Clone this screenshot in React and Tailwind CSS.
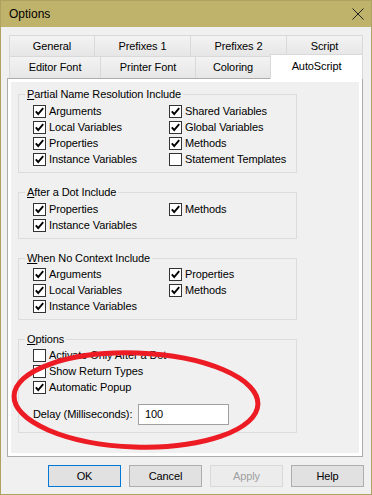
import React from 'react';

const Check = ({ checked }) => (
  <svg width="13" height="13" viewBox="0 0 13 13" className="shrink-0">
    <rect x="0.5" y="0.5" width="12" height="12" fill="#fff" stroke="#333" />
    {checked && (
      <path d="M2.8 6.4 L5.2 9 L10.2 3.2" fill="none" stroke="#000" strokeWidth="1.9" />
    )}
  </svg>
);

const Item = ({ label, checked = true }) => (
  <div className="flex h-[16px] items-center gap-[3px]">
    <Check checked={checked} />
    <span>{label}</span>
  </div>
);

const Group = ({ first, rest, children, className = '', bodyClass = '' }) => (
  <fieldset className={`w-[279px] border border-[#dcdcdc] px-[6px] ${className}`}>
    <legend className="px-[2px] leading-[16px]">
      <span className="underline">{first}</span>
      {rest}
    </legend>
    <div className={`pl-[8px] ${bodyClass}`}>{children}</div>
  </fieldset>
);

const Tab = ({ w, label, first }) => (
  <div
    className={`${w} ${first ? '' : '-ml-px'} flex items-center justify-center border-[#d9d9d9] bg-linear-to-b from-[#f3f3f3] to-[#e6e6e6]`}
  >
    {label}
  </div>
);

const Button = ({ children, variant }) => {
  const styles = {
    default: 'border-[#0078d7] bg-[#e1e1e1] text-black',
    normal: 'border-[#adadad] bg-[#e1e1e1] text-black',
    disabled: 'border-[#d9d9d9] bg-[#ececec] text-[#a0a0a0]',
  };
  return (
    <div className={`flex h-[22px] w-[73px] items-center justify-center border ${styles[variant]}`}>
      {children}
    </div>
  );
};

export default function App() {
  return (
    <div className="relative flex h-[495px] w-[372px] flex-col border border-[#ada25f] bg-[#f0f0f0] font-['Liberation_Sans',Arial,sans-serif] text-[11px] tracking-[-0.1px] text-black">
      {/* title bar */}
      <div className="flex h-[26px] shrink-0 items-center justify-between bg-[#bfb36b] pl-[8px] pr-[7px]">
        <span className="text-[12px] tracking-normal">Options</span>
        <svg width="12" height="12" viewBox="0 0 12 12">
          <path d="M0.5 0.5 L11.5 11.5 M11.5 0.5 L0.5 11.5" stroke="#222" strokeWidth="1" />
        </svg>
      </div>

      {/* tabs */}
      <div className="ml-[6px] mt-[8px]">
        <div className="ml-[2px] flex h-[21px]">
          <Tab first w="w-[86px] border-t border-l border-r" label="General" />
          <Tab w="w-[97px] border-t border-l border-r" label="Prefixes 1" />
          <Tab w="w-[97px] border-t border-l border-r" label="Prefixes 2" />
          <Tab w="w-[77px] border-t border-l border-r" label="Script" />
        </div>
        <div className="ml-[2px] flex h-[22px] items-end">
          <Tab first w="h-[22px] w-[92px] border-t border-l border-r" label="Editor Font" />
          <Tab w="h-[22px] w-[96px] border-t border-l border-r" label="Printer Font" />
          <Tab w="h-[22px] w-[76px] border-t border-l border-r" label="Coloring" />
          <div className="relative z-10 -mb-px -ml-px flex h-[25px] w-[93px] items-center justify-center border-l border-r border-t border-[#d9d9d9] bg-white pb-[2px]">
            AutoScript
          </div>
        </div>

        {/* panel */}
        <div className="h-[379px] w-[356px] border border-[#adadad] bg-white p-[3px]">
          <div className="h-full bg-[#f0f0f0] pl-[7px] pt-[4px]">
            <Group first="P" rest="artial Name Resolution Include" className="pb-[5px]" bodyClass="mt-px">
              <div className="grid grid-cols-[136px_1fr]">
                <Item label="Arguments" />
                <Item label="Shared Variables" />
                <Item label="Local Variables" />
                <Item label="Global Variables" />
                <Item label="Properties" />
                <Item label="Methods" />
                <Item label="Instance Variables" />
                <Item label="Statement Templates" checked={false} />
              </div>
            </Group>

            <Group first="A" rest="fter a Dot Include" className="mt-[11px] pb-[5px]" bodyClass="mt-px">
              <div className="grid grid-cols-[136px_1fr]">
                <Item label="Properties" />
                <Item label="Methods" />
                <Item label="Instance Variables" />
              </div>
            </Group>

            <Group first="W" rest="hen No Context Include" className="mt-[11px] pb-[5px]">
              <div className="grid grid-cols-[136px_1fr]">
                <Item label="Arguments" />
                <Item label="Properties" />
                <Item label="Local Variables" />
                <Item label="Methods" />
                <Item label="Instance Variables" />
              </div>
            </Group>

            <Group first="O" rest="ptions" className="mt-[11px] pb-[7px]">
              <Item label="Activate Only After a Dot" checked={false} />
              <Item label="Show Return Types" checked={false} />
              <Item label="Automatic Popup" />
              <div className="mt-[9px] flex h-[21px] items-center">
                <span className="w-[105px]">Delay (Milliseconds):</span>
                <div className="flex h-[21px] w-[91px] items-center border border-[#a0a0a0] bg-white px-[6px]">
                  100
                </div>
              </div>
            </Group>
          </div>
        </div>
      </div>

      {/* buttons */}
      <div className="mt-[8px] flex justify-end gap-[8px] pr-[7px]">
        <Button variant="default">OK</Button>
        <Button variant="normal">Cancel</Button>
        <Button variant="disabled">Apply</Button>
        <Button variant="normal">Help</Button>
      </div>

      {/* red annotation */}
      <svg className="pointer-events-none absolute left-[-1px] top-[-1px]" width="372" height="495">
        <ellipse
          cx="136"
          cy="400"
          rx="122"
          ry="47"
          transform="rotate(2 136 400)"
          fill="none"
          stroke="#ed1c24"
          strokeWidth="5"
        />
      </svg>
    </div>
  );
}
